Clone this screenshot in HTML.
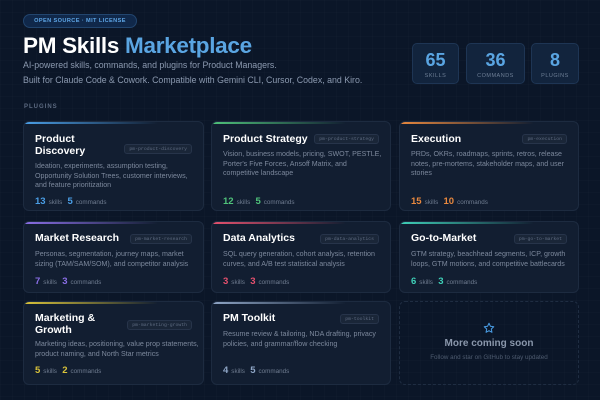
<!DOCTYPE html>
<html><head><meta charset="utf-8"><style>
*{margin:0;padding:0;box-sizing:border-box}
body{width:600px;height:400px;overflow:hidden;background:#0b1628;font-family:"Liberation Sans",sans-serif;color:#e8edf5;position:relative;
background-image:linear-gradient(rgba(255,255,255,0.012) 1px,transparent 1px),linear-gradient(90deg,rgba(255,255,255,0.012) 1px,transparent 1px);background-size:12px 12px}
.badge{position:absolute;left:23px;top:14px;width:114px;height:14px;border:1px solid #22456e;background:#10284a;border-radius:8px;font-size:5.6px;font-weight:bold;letter-spacing:.4px;color:#5ea6e6;text-align:center;line-height:12px}
h1{position:absolute;left:23px;top:33px;font-size:22.5px;line-height:26px;font-weight:bold;color:#fff;letter-spacing:-.3px;white-space:nowrap}
h1 span{color:#5aa5e2}
.sub{position:absolute;left:23px;top:58px;font-size:8.8px;line-height:15px;color:#8c9ab0;white-space:nowrap}
.lbl{position:absolute;left:24px;top:104px;font-size:6px;font-weight:bold;letter-spacing:1px;color:#5d6b82}
.st{position:absolute;top:43px;height:41px;border:1px solid #1e3554;background:#12243d;border-radius:5px;text-align:center}
.st b{display:block;font-size:18px;color:#5aa5e2;margin-top:6px;line-height:20px}
.st i{display:block;font-style:normal;font-size:5.5px;letter-spacing:.5px;color:#6e7f96;margin-top:3px}
.c{position:absolute;background:#121e31;border:1px solid #1d2b40;border-radius:6px;overflow:hidden}
.c:before{content:"";position:absolute;left:0;top:0;height:2px;width:75%;background:linear-gradient(90deg,var(--k),transparent)}
.c h3{position:absolute;left:11px;top:10px;font-size:10.5px;line-height:12px;color:#fff;font-weight:bold}
.c .t{position:absolute;right:11px;top:16px;font-family:"Liberation Mono",monospace;font-size:4.8px;color:#5e6b80;background:#1a2638;border:1px solid #27344a;border-radius:3px;padding:1.5px 4px}
.c p{position:absolute;left:11px;font-size:7.1px;line-height:9.7px;color:#7c889c;width:160px}
.c .n{position:absolute;left:11px;font-size:6.3px;color:#6f7c90}
.c .n b{font-size:9.5px;color:var(--k);margin-right:3px}
</style></head><body>
<div class="badge">OPEN SOURCE · MIT LICENSE</div>
<h1>PM Skills <span>Marketplace</span></h1>
<div class="sub">AI-powered skills, commands, and plugins for Product Managers.<br>Built for Claude Code &amp; Cowork. Compatible with Gemini CLI, Cursor, Codex, and Kiro.</div>
<div class="lbl">PLUGINS</div>
<div class="st" style="left:412px;width:47px"><b>65</b><i>SKILLS</i></div>
<div class="st" style="left:466px;width:59px"><b>36</b><i>COMMANDS</i></div>
<div class="st" style="left:531px;width:48px"><b>8</b><i>PLUGINS</i></div>

<div class="c" style="--k:#4a9ee6;left:23px;top:121px;width:181px;height:90px"><h3 style="top:11px">Product<br>Discovery</h3><span class="t" style="top:22px">pm-product-discovery</span><p style="top:40px">Ideation, experiments, assumption testing, Opportunity Solution Trees, customer interviews, and feature prioritization</p><div class="n" style="top:74px"><b>13</b>skills &nbsp; <b>5</b>commands</div></div>
<div class="c" style="--k:#4fc27a;left:211px;top:121px;width:180px;height:90px"><h3 style="top:11px">Product Strategy</h3><span class="t" style="top:12px">pm-product-strategy</span><p style="top:28px">Vision, business models, pricing, SWOT, PESTLE, Porter's Five Forces, Ansoff Matrix, and competitive landscape</p><div class="n" style="top:74px"><b>12</b>skills &nbsp; <b>5</b>commands</div></div>
<div class="c" style="--k:#e8883e;left:399px;top:121px;width:180px;height:90px"><h3 style="top:11px">Execution</h3><span class="t" style="top:12px">pm-execution</span><p style="top:28px;width:165px">PRDs, OKRs, roadmaps, sprints, retros, release notes, pre-mortems, stakeholder maps, and user stories</p><div class="n" style="top:74px"><b>15</b>skills &nbsp; <b>10</b>commands</div></div>

<div class="c" style="--k:#8a6ee6;left:23px;top:221px;width:181px;height:72px"><h3>Market Research</h3><span class="t" style="top:12px">pm-market-research</span><p style="top:28px">Personas, segmentation, journey maps, market sizing (TAM/SAM/SOM), and competitor analysis</p><div class="n" style="top:54px"><b>7</b>skills &nbsp; <b>3</b>commands</div></div>
<div class="c" style="--k:#e5516e;left:211px;top:221px;width:180px;height:72px"><h3>Data Analytics</h3><span class="t" style="top:12px">pm-data-analytics</span><p style="top:28px">SQL query generation, cohort analysis, retention curves, and A/B test statistical analysis</p><div class="n" style="top:54px"><b>3</b>skills &nbsp; <b>3</b>commands</div></div>
<div class="c" style="--k:#3fd0b8;left:399px;top:221px;width:180px;height:72px"><h3>Go-to-Market</h3><span class="t" style="top:12px">pm-go-to-market</span><p style="top:28px;width:165px">GTM strategy, beachhead segments, ICP, growth loops, GTM motions, and competitive battlecards</p><div class="n" style="top:54px"><b>6</b>skills &nbsp; <b>3</b>commands</div></div>

<div class="c" style="--k:#d8c23a;left:23px;top:301px;width:181px;height:84px"><h3>Marketing &amp;<br>Growth</h3><span class="t" style="top:18px">pm-marketing-growth</span><p style="top:38px;width:168px">Marketing ideas, positioning, value prop statements, product naming, and North Star metrics</p><div class="n" style="top:63px"><b>5</b>skills &nbsp; <b>2</b>commands</div></div>
<div class="c" style="--k:#8fa6c6;left:211px;top:301px;width:180px;height:84px"><h3>PM Toolkit</h3><span class="t" style="top:12px">pm-toolkit</span><p style="top:28px">Resume review &amp; tailoring, NDA drafting, privacy policies, and grammar/flow checking</p><div class="n" style="top:63px"><b>4</b>skills &nbsp; <b>5</b>commands</div></div>
<div style="position:absolute;left:399px;top:301px;width:180px;height:84px;border:1px dashed #1f2d42;border-radius:6px;text-align:center">
<svg width="12" height="12" viewBox="0 0 24 24" style="position:absolute;left:83px;top:20px"><path d="M12 2.5l2.9 6.1 6.6.8-4.9 4.6 1.3 6.6L12 17.3l-5.9 3.3 1.3-6.6-4.9-4.6 6.6-.8z" fill="none" stroke="#4a9ee6" stroke-width="2" stroke-linejoin="round"/></svg>
<div style="position:absolute;left:0;right:0;top:36px;font-size:10px;font-weight:bold;color:#8a97ab">More coming soon</div>
<div style="position:absolute;left:0;right:0;top:52px;font-size:6.3px;color:#4f5c70">Follow and star on GitHub to stay updated</div></div>
</body></html>
